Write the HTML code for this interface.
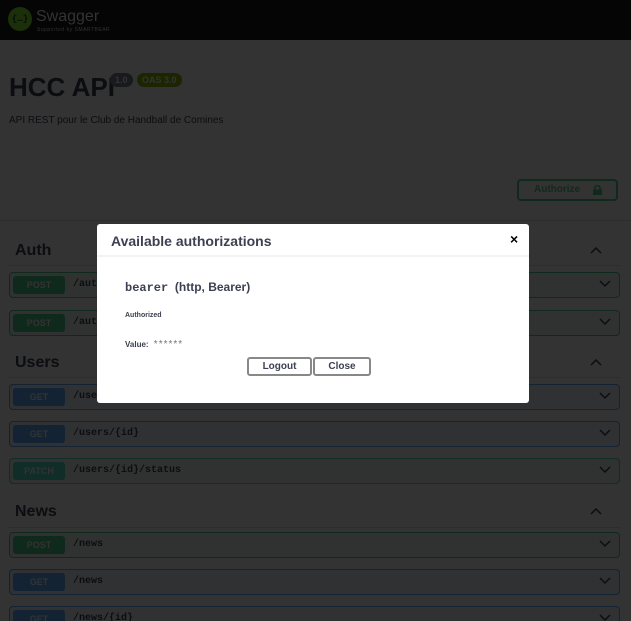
<!DOCTYPE html>
<html style="width:631px;height:621px;overflow:hidden"><head><style>
*{box-sizing:border-box;margin:0;padding:0}
body{width:631px;height:621px;overflow:hidden;background:#333;font-family:"Liberation Sans",sans-serif;position:relative;color:#0c0d10}
.top{position:absolute;left:0;top:0;width:631px;height:40px;background:#050505}
.logo{position:absolute;left:8px;top:7px;width:24px;height:24px;border-radius:50%;background:#1b2f09;color:#050b0e;font:bold 9px "Liberation Mono",monospace;text-align:center;line-height:24px}
.sw{position:absolute;left:36px;top:8px;color:#333;font-size:16px}
.sb{position:absolute;left:37px;top:27px;color:#333;font-size:5px;letter-spacing:.5px}
.abs{position:absolute}
h1{position:absolute;left:9px;top:72px;font-size:26px;font-weight:bold;color:#0c0d10}
.badge{position:absolute;top:73px;height:14px;border-radius:7px;color:#333;font-size:9px;font-weight:bold;line-height:14px;padding:0 5px}
.desc{position:absolute;left:9px;top:115px;font-size:10px}
.auth{position:absolute;left:517px;top:179px;width:101px;height:22px;border:2px solid #0f291d;border-radius:4px;color:#0f291d;font-size:10px;font-weight:bold;line-height:18px;padding-left:15px}
.lock{position:absolute;right:14px;top:4px;width:9px;height:10px}
.hline{position:absolute;left:0;top:220px;width:631px;height:1px;background:#2c2c2c}
.tag{position:absolute;left:15px;font-size:16px;font-weight:bold}
.tagl{position:absolute;left:9px;width:611px;height:1px;background:#2d2d2d}
.row{position:absolute;left:9px;width:611px;height:26px;border:1px solid;border-radius:4px}
.post{background:#2f3231;border-color:#0f291d}
.get{background:#2f3132;border-color:#132333}
.patch{background:#2f3231;border-color:#102d27}
.m{position:absolute;left:3px;top:3px;width:52px;height:18px;border-radius:3px;color:#333;font-size:9px;font-weight:bold;text-align:center;line-height:18px}
.p{position:absolute;left:63px;top:6px;font:bold 10px "Liberation Mono",monospace;color:#0c0d10}
.chev{position:absolute;right:8px;top:7px;width:12px;height:8px}
.modal{position:absolute;left:97px;top:224px;width:432px;height:179px;background:#fff;border-radius:3px;color:#3b4151}
.mh{height:33px;border-bottom:2px solid #f3f3f3;position:relative}
.btn{position:absolute;top:357px;height:19px;border:2px solid #888;border-radius:3px;font-size:10px;font-weight:bold;text-align:center;line-height:15px;background:#fff;color:#3b4151}
</style></head><body>
<div class="top"><div class="logo">{…}</div><div class="sw">Swagger</div><div class="sb">Supported by SMARTBEAR</div></div>
<h1>HCC API</h1>
<div class="badge" style="left:110px;background:#191a1d">1.0</div>
<div class="badge" style="left:137px;background:#1b2601">OAS 3.0</div>
<div class="desc">API REST pour le Club de Handball de Comines</div>
<div class="auth">Authorize<svg class="lock" viewBox="0 0 9 10"><path d="M2 5V3a2.5 2.5 0 0 1 5 0v2" stroke="#0f291d" stroke-width="1.5" fill="none"/><rect x="0" y="4.5" width="9" height="5.5" fill="#0f291d"/></svg></div>
<div class="hline"></div>

<div class="tag" style="top:242px">Auth</div><div class="tagl" style="top:265px"></div>
<svg class="abs" style="left:590px;top:246px" width="12" height="8" viewBox="0 0 12 8"><path d="M1 7L6 2l5 5" stroke="#0c0d10" stroke-width="1.5" fill="none"/></svg>
<div class="row post" style="top:272px"><div class="m" style="background:#0f291d">POST</div><div class="p">/auth/login</div><svg class="chev" viewBox="0 0 12 8"><path d="M1 1l5 5 5-5" stroke="#0c0d10" stroke-width="1.5" fill="none"/></svg></div>
<div class="row post" style="top:310px"><div class="m" style="background:#0f291d">POST</div><div class="p">/auth/register</div><svg class="chev" viewBox="0 0 12 8"><path d="M1 1l5 5 5-5" stroke="#0c0d10" stroke-width="1.5" fill="none"/></svg></div>

<div class="tag" style="top:354px">Users</div><div class="tagl" style="top:377px"></div>
<svg class="abs" style="left:590px;top:358px" width="12" height="8" viewBox="0 0 12 8"><path d="M1 7L6 2l5 5" stroke="#0c0d10" stroke-width="1.5" fill="none"/></svg>
<div class="row get" style="top:384px"><div class="m" style="background:#132333">GET</div><div class="p">/users</div><svg class="chev" viewBox="0 0 12 8"><path d="M1 1l5 5 5-5" stroke="#0c0d10" stroke-width="1.5" fill="none"/></svg></div>
<div class="row get" style="top:421px"><div class="m" style="background:#132333">GET</div><div class="p">/users/{id}</div><svg class="chev" viewBox="0 0 12 8"><path d="M1 1l5 5 5-5" stroke="#0c0d10" stroke-width="1.5" fill="none"/></svg></div>
<div class="row patch" style="top:458px"><div class="m" style="background:#102d27">PATCH</div><div class="p">/users/{id}/status</div><svg class="chev" viewBox="0 0 12 8"><path d="M1 1l5 5 5-5" stroke="#0c0d10" stroke-width="1.5" fill="none"/></svg></div>

<div class="tag" style="top:503px">News</div><div class="tagl" style="top:527px"></div>
<svg class="abs" style="left:590px;top:507px" width="12" height="8" viewBox="0 0 12 8"><path d="M1 7L6 2l5 5" stroke="#0c0d10" stroke-width="1.5" fill="none"/></svg>
<div class="row post" style="top:532px"><div class="m" style="background:#0f291d">POST</div><div class="p">/news</div><svg class="chev" viewBox="0 0 12 8"><path d="M1 1l5 5 5-5" stroke="#0c0d10" stroke-width="1.5" fill="none"/></svg></div>
<div class="row get" style="top:569px"><div class="m" style="background:#132333">GET</div><div class="p">/news</div><svg class="chev" viewBox="0 0 12 8"><path d="M1 1l5 5 5-5" stroke="#0c0d10" stroke-width="1.5" fill="none"/></svg></div>
<div class="row get" style="top:606px;height:15px;border-bottom:none;border-radius:4px 4px 0 0"><div class="m" style="background:#132333">GET</div><div class="p">/news/{id}</div><svg class="chev" viewBox="0 0 12 8"><path d="M1 1l5 5 5-5" stroke="#0c0d10" stroke-width="1.5" fill="none"/></svg></div>

<div class="modal">
<div class="mh"><div class="abs" style="left:14px;top:9px;font-size:14px;font-weight:bold">Available authorizations</div>
<div class="abs" style="left:413px;top:7px;font-size:14px;font-weight:bold;color:#000">×</div></div>
<div class="abs" style="left:28px;top:56px;font-size:12px;font-weight:bold"><span style="font-family:'Liberation Mono',monospace">bearer</span>&nbsp; (http, Bearer)</div>
<div class="abs" style="left:28px;top:88px;font-size:7px;font-weight:bold">Authorized</div>
<div class="abs" style="left:28px;top:115px;font-size:8px;font-weight:bold">Value: <span style="font-weight:normal;color:#777;font-size:10px;letter-spacing:1px;margin-left:3px">******</span></div>
</div>
<div class="btn" style="left:247px;width:65px">Logout</div>
<div class="btn" style="left:313px;width:58px">Close</div>
</body></html>
